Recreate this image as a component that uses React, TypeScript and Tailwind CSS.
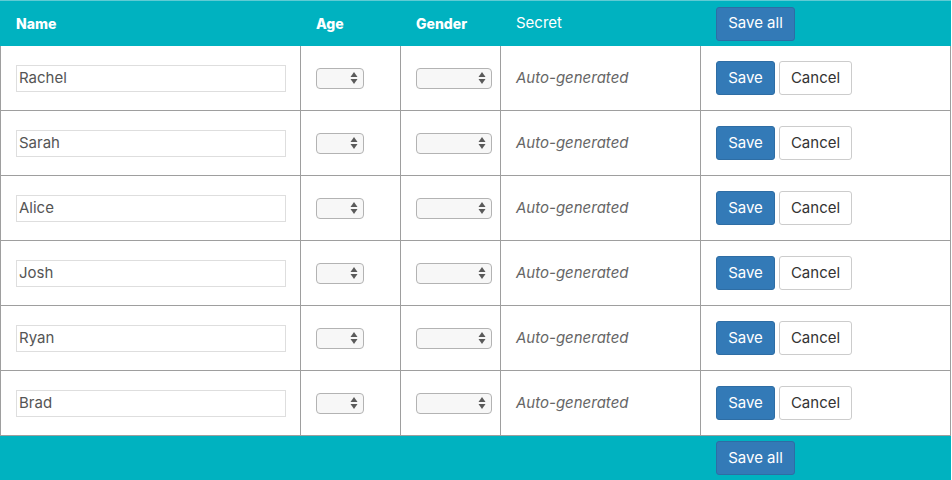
import React from "react";

const names = ["Rachel", "Sarah", "Alice", "Josh", "Ryan", "Brad"];

function Arrows() {
  return (
    <svg width="8" height="13" viewBox="0 0 8 13" className="absolute right-[5px] top-1/2 -translate-y-1/2">
      <path d="M4 0.5 L7.5 5.5 L0.5 5.5 Z" fill="#5a5a5a" />
      <path d="M4 12.5 L7.5 7.5 L0.5 7.5 Z" fill="#5a5a5a" />
    </svg>
  );
}

function FakeSelect({ w }: { w: string }) {
  return (
    <div className={`relative h-[21px] ${w} rounded-[4px] border border-[#b3b3b3] bg-[#f7f7f7]`}>
      <Arrows />
    </div>
  );
}

function SaveAll() {
  return (
    <button className="h-[34px] w-[79px] rounded-[3px] border border-[#2e6da4] bg-[#337ab7] text-[15px] text-white">
      Save all
    </button>
  );
}

export default function App() {
  return (
    <div
      className="w-[951px] bg-white"
      style={{ fontFamily: 'Inter, "Liberation Sans", sans-serif' }}
    >
      {/* header */}
      <div className="flex h-[46px] items-center border-t border-[#5fcbd4] bg-[#00b2c0] text-[14px] text-white">
        <div className="w-[301px] pl-[16px] font-extrabold">Name</div>
        <div className="w-[100px] pl-[15px] font-extrabold">Age</div>
        <div className="w-[100px] pl-[15px] font-extrabold">Gender</div>
        <div className="w-[200px] pl-[15px] text-[15px]">Secret</div>
        <div className="flex-1 pl-[15px]">
          <SaveAll />
        </div>
      </div>

      {names.map((n) => (
        <div key={n} className="flex h-[65px] border-b border-l border-r border-[#9e9e9e]">
          <div className="flex w-[300px] items-center border-r border-[#9e9e9e] pl-[15px] pr-[14px]">
            <div className="flex h-[27px] w-full items-center border border-[#dedede] pl-[2px] text-[15px] text-[#555]">
              {n}
            </div>
          </div>
          <div className="flex w-[100px] items-center border-r border-[#9e9e9e] pl-[15px]">
            <FakeSelect w="w-[48px]" />
          </div>
          <div className="flex w-[100px] items-center border-r border-[#9e9e9e] pl-[15px]">
            <FakeSelect w="w-[76px]" />
          </div>
          <div className="flex w-[200px] items-center border-r border-[#9e9e9e] pl-[15px] text-[15px] italic text-[#666]">
            Auto-generated
          </div>
          <div className="flex flex-1 items-center gap-[4px] pl-[15px]">
            <button className="h-[34px] w-[59px] rounded-[3px] border border-[#2e6da4] bg-[#337ab7] text-[15px] text-white">
              Save
            </button>
            <button className="h-[34px] w-[73px] rounded-[3px] border border-[#cccccc] bg-white text-[15px] text-[#333]">
              Cancel
            </button>
          </div>
        </div>
      ))}

      {/* footer */}
      <div className="flex h-[44px] items-center bg-[#00b2c0]">
        <div className="w-[701px]" />
        <div className="pl-[15px]">
          <SaveAll />
        </div>
      </div>
    </div>
  );
}
